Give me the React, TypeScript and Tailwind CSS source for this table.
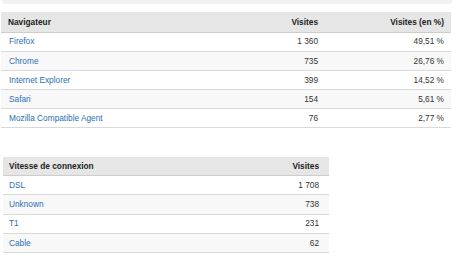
import React from "react";

const browsers = [
  ["Firefox", "1 360", "49,51 %"],
  ["Chrome", "735", "26,76 %"],
  ["Internet Explorer", "399", "14,52 %"],
  ["Safari", "154", "5,61 %"],
  ["Mozilla Compatible Agent", "76", "2,77 %"],
];

const speeds = [
  ["DSL", "1 708"],
  ["Unknown", "738"],
  ["T1", "231"],
  ["Cable", "62"],
];

export default function App() {
  return (
    <div
      className="w-[460px] h-[260px] bg-white overflow-hidden text-[8.3px] text-[#333]"
      style={{ fontFamily: '"Liberation Sans", Arial, sans-serif' }}
    >
      <div className="ml-[2px] w-[450px] h-[4px] bg-[#f1f1f1] rounded-b-[3px]" />
      <table className="ml-[1px] mt-[8px] w-[450px] border-collapse">
        <thead>
          <tr className="bg-[#e6e6e6] h-[20px] border-b border-[#cdcdcd]">
            <th className="text-left font-bold pl-[7px] p-0 text-[#222]">Navigateur</th>
            <th className="text-right font-bold pr-[7px] w-[90px] text-[#222]">Visites</th>
            <th className="text-right font-bold pr-[7px] w-[126px] text-[#222]">Visites (en %)</th>
          </tr>
        </thead>
        <tbody>
          {browsers.map((r, i) => (
            <tr
              key={r[0]}
              className={`h-[19.2px] border-b border-[#d9d9d9] ${i % 2 === 1 ? "bg-[#f8f8f8]" : "bg-white"}`}
            >
              <td className="pl-[8px] text-[#2a6fb5]">{r[0]}</td>
              <td className="text-right pr-[7px]">{r[1]}</td>
              <td className="text-right pr-[7px]">{r[2]}</td>
            </tr>
          ))}
        </tbody>
      </table>
      <table className="ml-[3px] mt-[29px] w-[326px] border-collapse">
        <thead>
          <tr className="bg-[#e6e6e6] h-[18px] border-b border-[#cdcdcd]">
            <th className="text-left font-bold pl-[6px] text-[#222]">Vitesse de connexion</th>
            <th className="text-right font-bold pr-[10px] text-[#222]">Visites</th>
          </tr>
        </thead>
        <tbody>
          {speeds.map((r, i) => (
            <tr
              key={r[0]}
              className={`h-[19.3px] border-b border-[#d9d9d9] ${i % 2 === 1 ? "bg-[#f8f8f8]" : "bg-white"}`}
            >
              <td className="pl-[6px] text-[#2a6fb5]">{r[0]}</td>
              <td className="text-right pr-[10px]">{r[1]}</td>
            </tr>
          ))}
        </tbody>
      </table>
    </div>
  );
}
